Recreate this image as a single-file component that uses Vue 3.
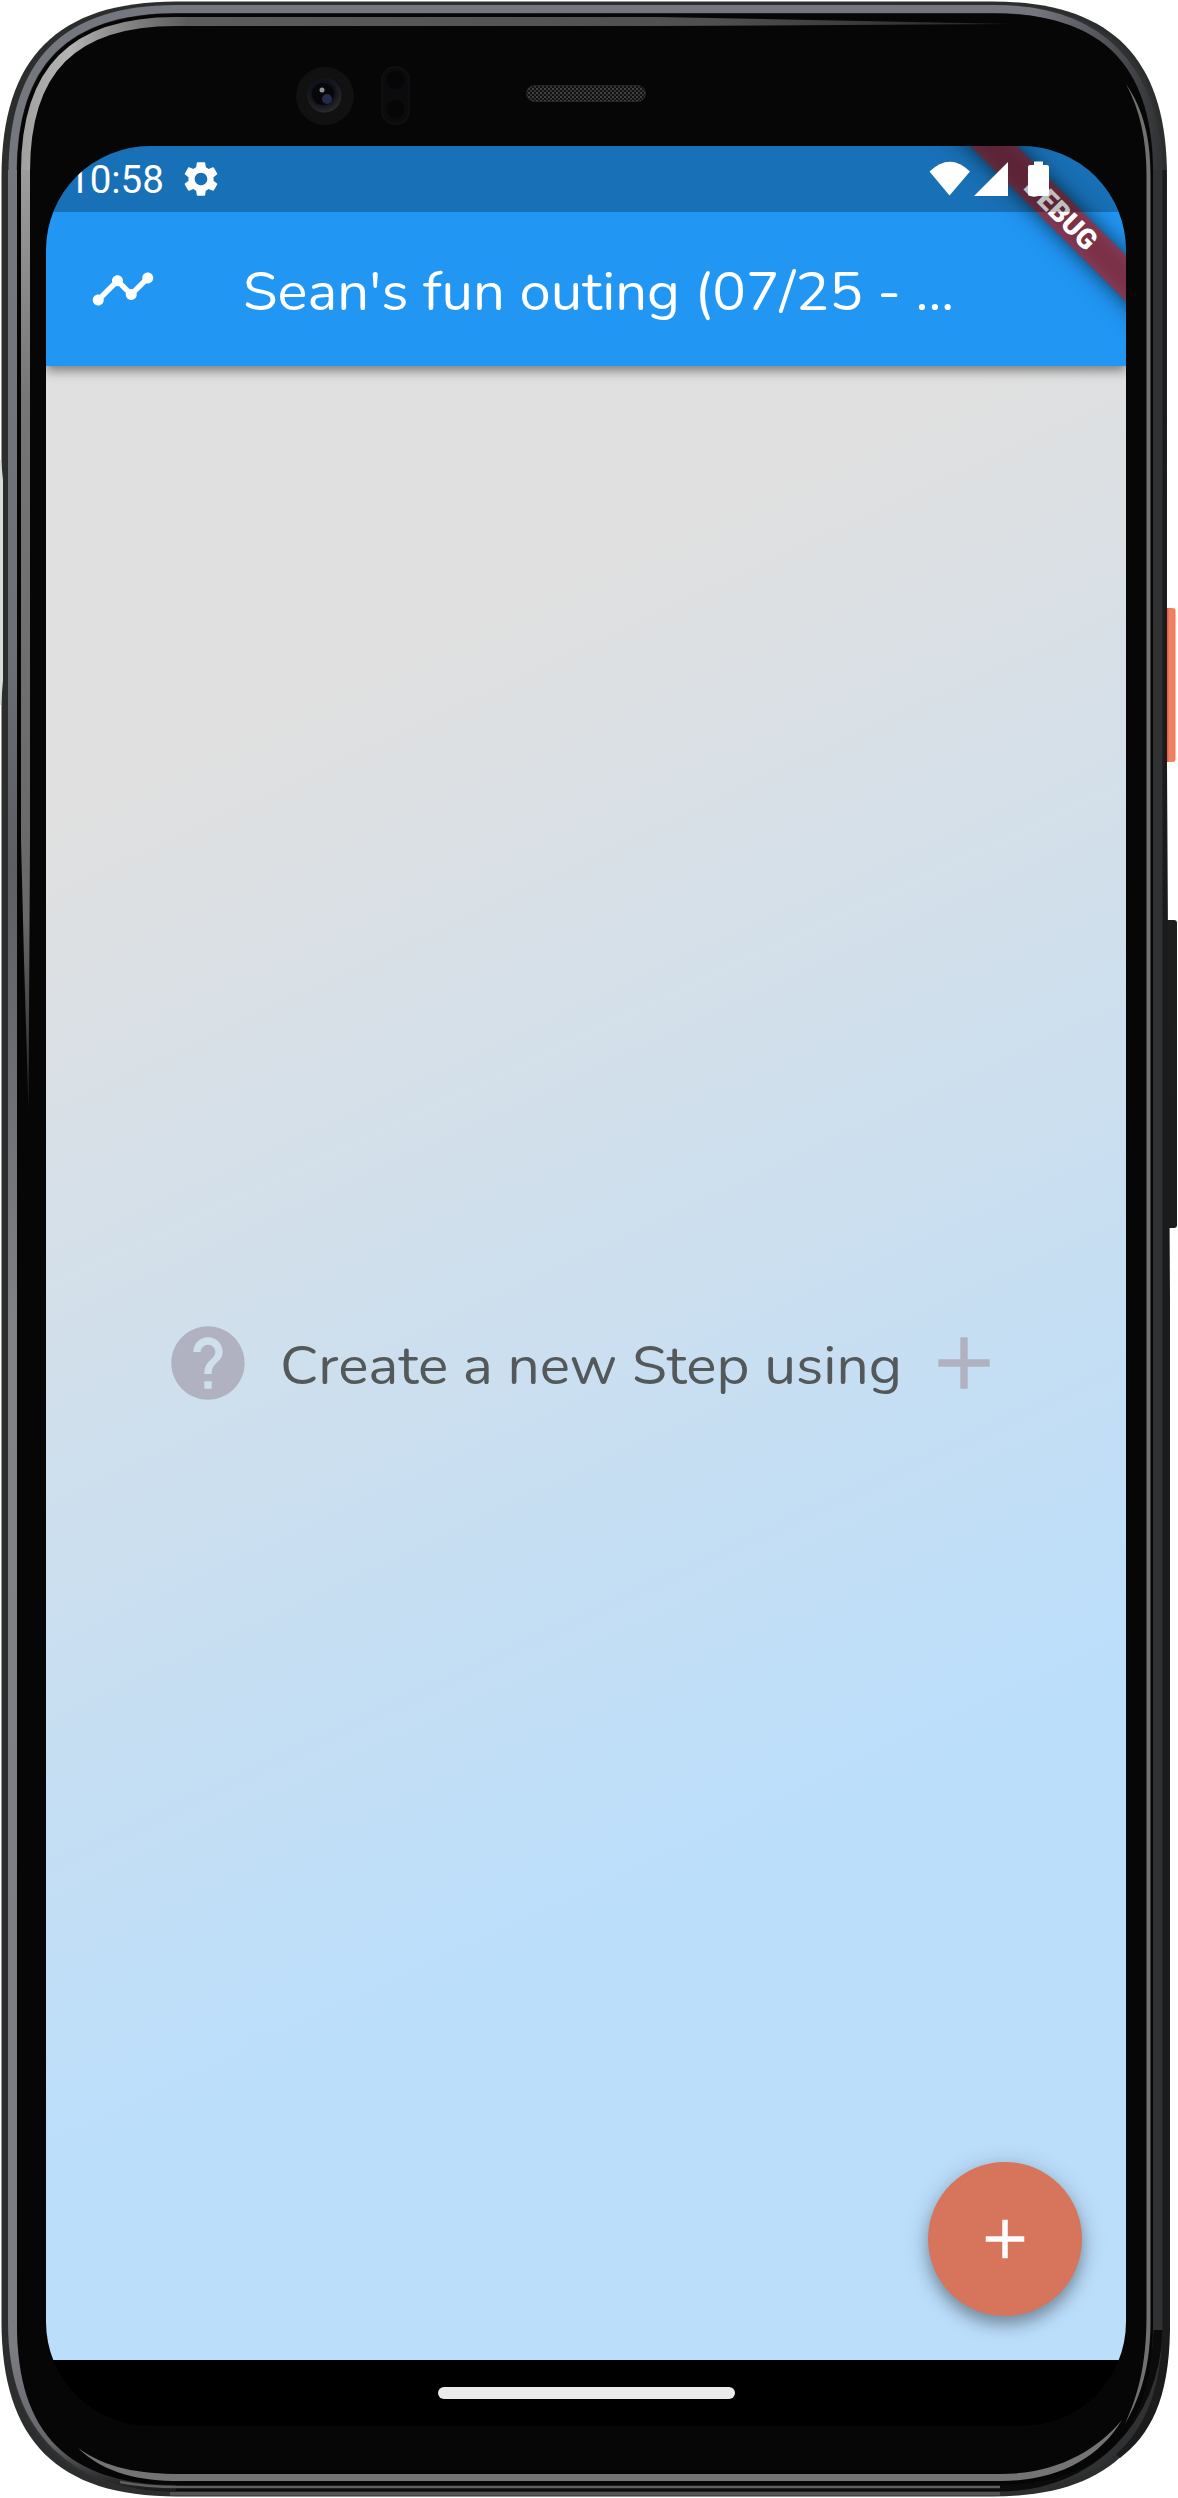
<script setup>
// Closed outline of a rounded slab: k is the corner extent, corners are slightly squarer than a circle
const slab = (l, t, r, b, k) => {
  const c = k * 0.32
  return `M${l} ${t + k}C${l} ${t + c} ${l + c} ${t} ${l + k} ${t}H${r - k}C${r - c} ${t} ${r} ${t + c} ${r} ${t + k}V${b - k}C${r} ${b - c} ${r - c} ${b} ${r - k} ${b}H${l + k}C${l + c} ${b} ${l} ${b - c} ${l} ${b - k}Z`
}
</script>

<template>
  <main class="stage">
    <svg class="body" width="1178" height="2498" viewBox="0 0 1178 2498" aria-hidden="true">
      <defs>
        <linearGradient id="metalTop" gradientUnits="userSpaceOnUse" x1="0" y1="0" x2="1178" y2="0">
          <stop offset="0" stop-color="#75777e" />
          <stop offset=".88" stop-color="#75757e" />
          <stop offset=".95" stop-color="#4b4c50" />
          <stop offset=".985" stop-color="#303234" />
        </linearGradient>
        <linearGradient id="metalLeft" gradientUnits="userSpaceOnUse" x1="0" y1="170" x2="0" y2="2490">
          <stop offset="0" stop-color="#75777e" />
          <stop offset=".2" stop-color="#6d7077" />
          <stop offset=".3" stop-color="#5c5e64" />
          <stop offset=".5" stop-color="#808286" />
          <stop offset=".94" stop-color="#7b7c82" />
          <stop offset=".98" stop-color="#66666b" />
          <stop offset="1" stop-color="#1c1c1d" />
        </linearGradient>
        <linearGradient id="glowTop" gradientUnits="userSpaceOnUse" x1="20" y1="0" x2="1010" y2="0">
          <stop offset="0" stop-color="#a0a0a0" />
          <stop offset=".05" stop-color="#b4b4b4" />
          <stop offset=".09" stop-color="#909090" />
          <stop offset=".17" stop-color="#5c5c5c" />
          <stop offset=".7" stop-color="#4f4f4f" />
          <stop offset="1" stop-color="#262626" />
        </linearGradient>
        <linearGradient id="glowLeft" gradientUnits="userSpaceOnUse" x1="0" y1="170" x2="0" y2="1110">
          <stop offset="0" stop-color="#9c9c9c" />
          <stop offset=".25" stop-color="#757575" />
          <stop offset=".8" stop-color="#686868" />
          <stop offset="1" stop-color="#222" />
        </linearGradient>
        <linearGradient id="power" x1="0" y1="0" x2="1" y2="0">
          <stop offset="0" stop-color="#e2583c" />
          <stop offset=".45" stop-color="#e2583c" />
          <stop offset=".6" stop-color="#ef8264" />
          <stop offset=".85" stop-color="#f08062" />
          <stop offset="1" stop-color="#ff7350" />
        </linearGradient>
        <pattern id="mesh" width="4" height="4" patternUnits="userSpaceOnUse">
          <rect width="4" height="4" fill="#111" />
          <rect width="2" height="2" fill="#414141" />
          <rect x="2" y="2" width="2" height="2" fill="#333" />
        </pattern>
        <radialGradient id="lens" cx=".45" cy=".4" r=".6">
          <stop offset="0" stop-color="#0c0c12" />
          <stop offset=".6" stop-color="#11131c" />
          <stop offset="1" stop-color="#2a2a2a" />
        </radialGradient>
      </defs>

      <rect x="1160" y="608" width="15.500" height="154" rx="3" fill="url(#power)" />
      <rect x="1160" y="920" width="17" height="308" rx="3" fill="#1d1d1d" />

      <!-- chassis -->
      <path :d="slab(1.5, 1.5, 1167, 2496.5, 175)" fill="#2c2e2d" />
      <path d="M1162 1000V170L1166.500 170L1167 762L1170 1300V2330C1169 2400 1150 2435 1120 2458L1100 2440Z" fill="#1b1b1b" />
      <path d="M170 2493.500H1000" stroke="#555" stroke-width="4" fill="none" />
      <path :d="slab(8, 5, 1162.5, 2490.5, 168)" fill="#2f3133" />
      <path d="M1158 2330C1156 2420 1090 2487 1000 2487H176C110 2487 60 2460 36 2420" fill="none" stroke="#0b0b0c" stroke-width="9" />
      <path d="M12.500 170V2322C12.500 2432 75 2487 176 2487" fill="none" stroke="url(#metalLeft)" stroke-width="9" />
      <path d="M12.500 174C12.500 62 65 9 177 9H995C1098 9 1156 66 1158 170" fill="none" stroke="url(#metalTop)" stroke-width="8" />
      <path d="M120 2482C140 2486 160 2487 180 2487H1000" stroke="#5f5f60" stroke-width="2.500" fill="none" />
      <path :d="slab(17, 13.5, 1153, 2485, 160)" fill="#060607" />

      <!-- glass highlights -->
      <path d="M25.500 171.500C25.500 70 73 21.500 175.500 21.500H660" stroke="url(#glowTop)" stroke-width="9" fill="none" />
      <path d="M659 17L1010 24L659 26Z" fill="url(#glowTop)" />
      <path d="M21 170H30V840L28.500 1110L24 960L21 840Z" fill="url(#glowLeft)" />
      <path d="M1126 84C1144 110 1150.500 140 1150.500 175V2322C1150.500 2375 1136 2405 1125 2424C1138 2395 1146.500 2365 1146.500 2315V175C1146.500 140 1140 110 1126 84Z" fill="#717171" />
      <path d="M78 2448C105 2468 140 2474 180 2474H1000C1055 2474 1095 2452 1122 2420C1098 2460 1055 2481 1000 2481H180C140 2481 105 2474 78 2448Z" fill="#747474" />

      <!-- left edge recess -->
      <path d="M0 460H1L3 480V680L1 705H0Z" fill="#d9dddb" />

      <circle cx="325" cy="96" r="29" fill="#111" />
      <circle cx="324.500" cy="95.500" r="17" fill="url(#lens)" />
      <circle cx="323" cy="94" r="11" fill="#07070a" />
      <circle cx="327" cy="99" r="5" fill="#252b4a" />
      <circle cx="322" cy="90" r="2.500" fill="#8f8f94" />
      <rect x="382" y="67" width="27" height="57" rx="13" fill="#0b0b0d" stroke="#121214" stroke-width="1.500" />
      <circle cx="395.500" cy="80" r="9" fill="#060607" />
      <circle cx="395.500" cy="109" r="9" fill="#060607" />
      <rect x="526.500" y="85.500" width="119" height="16" rx="8" fill="url(#mesh)" stroke="#262626" />
    </svg>

    <section class="screen">
      <header class="top">
        <div class="status">
          <span class="time">10:58</span>
          <svg class="gear" width="42" height="42" viewBox="0 0 24 24"><path fill="#fff" d="M19.140 12.940c.04-.3.06-.61.06-.94 0-.32-.02-.64-.07-.94l2.030-1.580a.49.49 0 0 0 .12-.61l-1.920-3.320a.488.488 0 0 0-.59-.22l-2.390.96c-.5-.38-1.030-.7-1.620-.94l-.36-2.540a.484.484 0 0 0-.48-.41h-3.840c-.24 0-.43.17-.47.41l-.36 2.540c-.59.24-1.130.57-1.620.94l-2.390-.96c-.22-.08-.47 0-.59.22L2.740 8.870c-.12.21-.08.47.12.61l2.030 1.580c-.05.3-.09.63-.09.94s.02.64.07.94l-2.030 1.580a.49.49 0 0 0-.12.61l1.920 3.320c.12.22.37.29.59.22l2.390-.96c.5.38 1.030.7 1.620.94l.36 2.540c.05.24.24.41.48.41h3.840c.24 0 .44-.17.47-.41l.36-2.540c.59-.24 1.130-.56 1.620-.94l2.390.96c.22.08.47 0 .59-.22l1.920-3.320c.12-.22.07-.47-.12-.61l-2.010-1.580zM12 15.600c-1.980 0-3.600-1.620-3.600-3.600s1.620-3.600 3.600-3.600 3.600 1.620 3.600 3.600-1.620 3.600-3.600 3.600z" /></svg>
        </div>
        <div class="appbar">
          <svg width="66" height="66" viewBox="0 0 24 24"><path fill="#fff" d="M23 8c0 1.100-.9 2-2 2-.18 0-.35-.02-.51-.07l-3.560 3.550c.05.160.07.340.07.520 0 1.100-.9 2-2 2s-2-.9-2-2c0-.18.020-.36.070-.52l-2.550-2.550c-.16.050-.34.070-.52.070s-.36-.02-.52-.07l-4.550 4.560c.05.160.07.330.07.510 0 1.100-.9 2-2 2s-2-.9-2-2 .9-2 2-2c.18 0 .35.020.51.070l4.560-4.550C8.020 9.360 8 9.180 8 9c0-1.100.9-2 2-2s2 .9 2 2c0 .18-.02.36-.07.52l2.550 2.550c.16-.05.34-.07.52-.07s.36.020.52.070l3.550-3.560C19.020 8.350 19 8.180 19 8c0-1.100.9-2 2-2s2 .9 2 2z" /></svg>
          <h1><svg class="fit" width="714" height="80"><text x="-1" y="60.500" textLength="711" lengthAdjust="spacingAndGlyphs">Sean's fun outing (07/25 - ...</text></svg></h1>
        </div>
        <div class="ribbon">DEBUG</div>
        <div class="shade"></div>
        <svg class="signals" width="130" height="40" viewBox="0 0 130 40" fill="#fff">
          <path d="M.5 10.500Q21-9 41 10.500L20.500 34.500Z" />
          <path d="M45 35L79 1V35Z" />
          <path d="M105 .5H114V4H118Q120 4 120 6V33Q120 35 118 35H101Q99 35 99 33V6Q99 4 101 4H105Z" />
        </svg>
      </header>

      <div class="content">
        <div class="hint">
          <svg width="88" height="88" viewBox="0 0 24 24"><path fill="#b0b2c1" d="M12 2C6.480 2 2 6.480 2 12s4.480 10 10 10 10-4.480 10-10S17.520 2 12 2zm1 17h-2v-2h2v2zm2.070-7.750l-.9.920C13.450 12.900 13 13.500 13 15h-2v-.5c0-1.100.45-2.100 1.170-2.830l1.240-1.260c.37-.36.590-.86.590-1.410 0-1.100-.9-2-2-2s-2 .9-2 2H8c0-2.210 1.790-4 4-4s4 1.790 4 4c0 .880-.36 1.680-.93 2.250z" /></svg>
          <svg class="fit" width="620" height="80"><text x="0" y="60.500" textLength="622" lengthAdjust="spacingAndGlyphs">Create a new Step using</text></svg>
          <svg width="88" height="88" viewBox="0 0 24 24"><path fill="#b0b2c1" d="M19 13h-6v6h-2v-6H5v-2h6V5h2v6h6v2z" /></svg>
        </div>
        <button class="fab" aria-label="Add step"><svg width="66" height="66" viewBox="0 0 24 24"><path fill="#fff" d="M19 13h-6v6h-2v-6H5v-2h6V5h2v6h6v2z" /></svg></button>
      </div>
      <footer class="nav"><i></i></footer>
    </section>
  </main>
</template>

<style>
body { background: #fff; }
</style>
<style scoped>
.stage { position: relative; width: 1178px; height: 2498px; box-sizing: border-box; padding: 146px 52px 72px 46px; overflow: hidden; }
.body { position: absolute; inset: 0; display: block; }
.screen { position: relative; width: 1080px; height: 2280px; border-radius: 104px; overflow: hidden; display: flex; flex-direction: column; background: #000; }
.top { position: relative; z-index: 1; height: 220px; background: #2196f3; box-shadow: 0 5px 11px rgba(0,0,0,.33), 0 2px 10px rgba(0,0,0,.2); flex: none; }
.status { position: relative; z-index: 2; height: 66px; display: flex; align-items: center; }
.time { font: 400 38.5px/64px Roboto, sans-serif; color: #fff; margin-left: 22px; padding-top: 2px; width: 96px; white-space: nowrap; }
.gear { margin-left: 16px; }
.appbar { height: 154px; display: flex; align-items: center; padding-left: 44px; }
h1 { margin: 0 0 0 88px; font: inherit; }
.fit { display: block; overflow: visible; font: 400 55px Nunito, "Open Sans", sans-serif; fill: #fff; }
.shade { position: absolute; top: 0; left: 0; right: 0; height: 66px; background: rgba(0,0,0,.25); }
.signals { position: absolute; left: 883px; top: 15px; }
.ribbon { position: absolute; left: 854.5px; top: 50.5px; width: 320px; height: 33px; transform: rotate(45deg); background: linear-gradient(#7f3a54, #7b3148 35%, #7b3148 65%, #7f3a54); color: #fff; text-align: center; font: 900 28px/33px Roboto, sans-serif; box-shadow: 0 0 17px rgba(0,0,0,.5), 0 0 32px rgba(0,0,0,.2); }
.content { flex: 1; position: relative; display: flex; align-items: center; justify-content: center; background: linear-gradient(155deg, #e0e0e0 18%, #bbdefb 73%); }
.hint { display: flex; align-items: center; }
.hint .fit { margin: 0 20px 0 28px; fill: #53595a; }
.fab { position: absolute; right: 44px; bottom: 44px; width: 154px; height: 154px; padding: 0; border: 0; border-radius: 50%; background: #d6755c; display: flex; align-items: center; justify-content: center; box-shadow: 0 9px 14px rgba(0,0,0,.25), 0 4px 26px rgba(0,0,0,.2); }
.fab svg, .hint svg { display: block; }
.nav { height: 66px; display: flex; align-items: center; justify-content: center; }
.nav i { width: 297px; height: 12px; border-radius: 6px; background: #ebebeb; }
</style>
